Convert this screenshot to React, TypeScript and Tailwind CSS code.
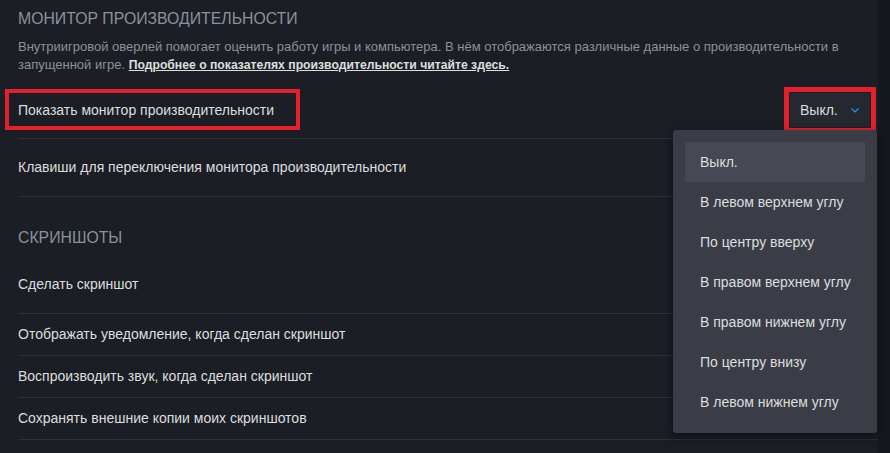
import React from 'react';

const font = { fontFamily: '"Liberation Sans", Arial, sans-serif' };

const positions = [
  'Выкл.',
  'В левом верхнем углу',
  'По центру вверху',
  'В правом верхнем углу',
  'В правом нижнем углу',
  'По центру внизу',
  'В левом нижнем углу',
];

const Chevron: React.FC = () => (
  <svg width="10" height="7" viewBox="0 0 10 7" fill="none" className="text-[#1a9fff]">
    <path d="M1.5 1.5 L5 5 L8.5 1.5" stroke="currentColor" strokeWidth="1.1" />
  </svg>
);

const Row: React.FC<{ label: string; h: string; children?: React.ReactNode }> = ({ label, h, children }) => (
  <div className={`flex items-center border-b border-[#2c3038] ${h}`}>
    <span className="text-[14px] text-[#dcdedf]">{label}</span>
    {children}
  </div>
);

export default function App() {
  return (
    <div className="flex w-[890px] h-[453px] overflow-hidden bg-[#1b1e25]" style={font}>
      <div className="relative w-[878px] pl-[18px]">
        {/* Performance monitor */}
        <div className="pt-[9px] text-[15.8px] leading-[20px] text-[#8b929a] uppercase">
          Монитор производительности
        </div>
        <p className="mt-[9px] text-[13px] leading-[18px] text-[#8b929a] pr-[20px]">
          Внутриигровой оверлей помогает оценить работу игры и компьютера. В нём отображаются различные данные о
          производительности в запущенной игре.{' '}
          <span className="text-[12.2px] font-bold text-[#dcdedf] underline">
            Подробнее о показателях производительности читайте здесь.
          </span>
        </p>
        <div className="mt-[8px]">
          <Row label="Показать монитор производительности" h="h-[57px]">
            <button className="ml-auto mr-[8px] flex h-[34px] w-[80px] items-center justify-between bg-[#25282f] pl-[10px] pr-[10px] text-[14px] text-[#dcdedf]">
              Выкл.
              <Chevron />
            </button>
          </Row>
          <Row label="Клавиши для переключения монитора производительности" h="h-[58px]" />
        </div>

        {/* Screenshots */}
        <div className="pt-[31px] pb-[8px] text-[15.8px] leading-[20px] text-[#8b929a] uppercase">
          Скриншоты
        </div>
        <Row label="Сделать скриншот" h="h-[58px]" />
        <Row label="Отображать уведомление, когда сделан скриншот" h="h-[42px]" />
        <Row label="Воспроизводить звук, когда сделан скриншот" h="h-[42px]" />
        <Row label="Сохранять внешние копии моих скриншотов" h="h-[42px]" />

        {/* annotation boxes */}
        <div className="absolute left-[5px] top-[89px] w-[295px] h-[41px] border-[4px] border-[#e3202b]" />
        <div className="absolute left-[784px] top-[87px] w-[92px] h-[46px] border-[5px] border-[#e3202b]" />

        {/* dropdown menu */}
        <div className="absolute left-[673px] top-[130px] w-[204px] h-[303px] rounded-[3px] bg-[#3a3d46] shadow-[0_4px_12px_rgba(0,0,0,0.5)] px-[12px] pt-[12px]">
          {positions.map((p, i) => (
            <div
              key={p}
              className={`flex h-[40px] items-center pl-[15px] text-[14px] text-[#dcdedf] ${i === 0 ? 'bg-[#464953]' : ''}`}
            >
              {p}
            </div>
          ))}
        </div>
      </div>
      <div className="w-[12px] bg-[#15181d]" />
    </div>
  );
}
